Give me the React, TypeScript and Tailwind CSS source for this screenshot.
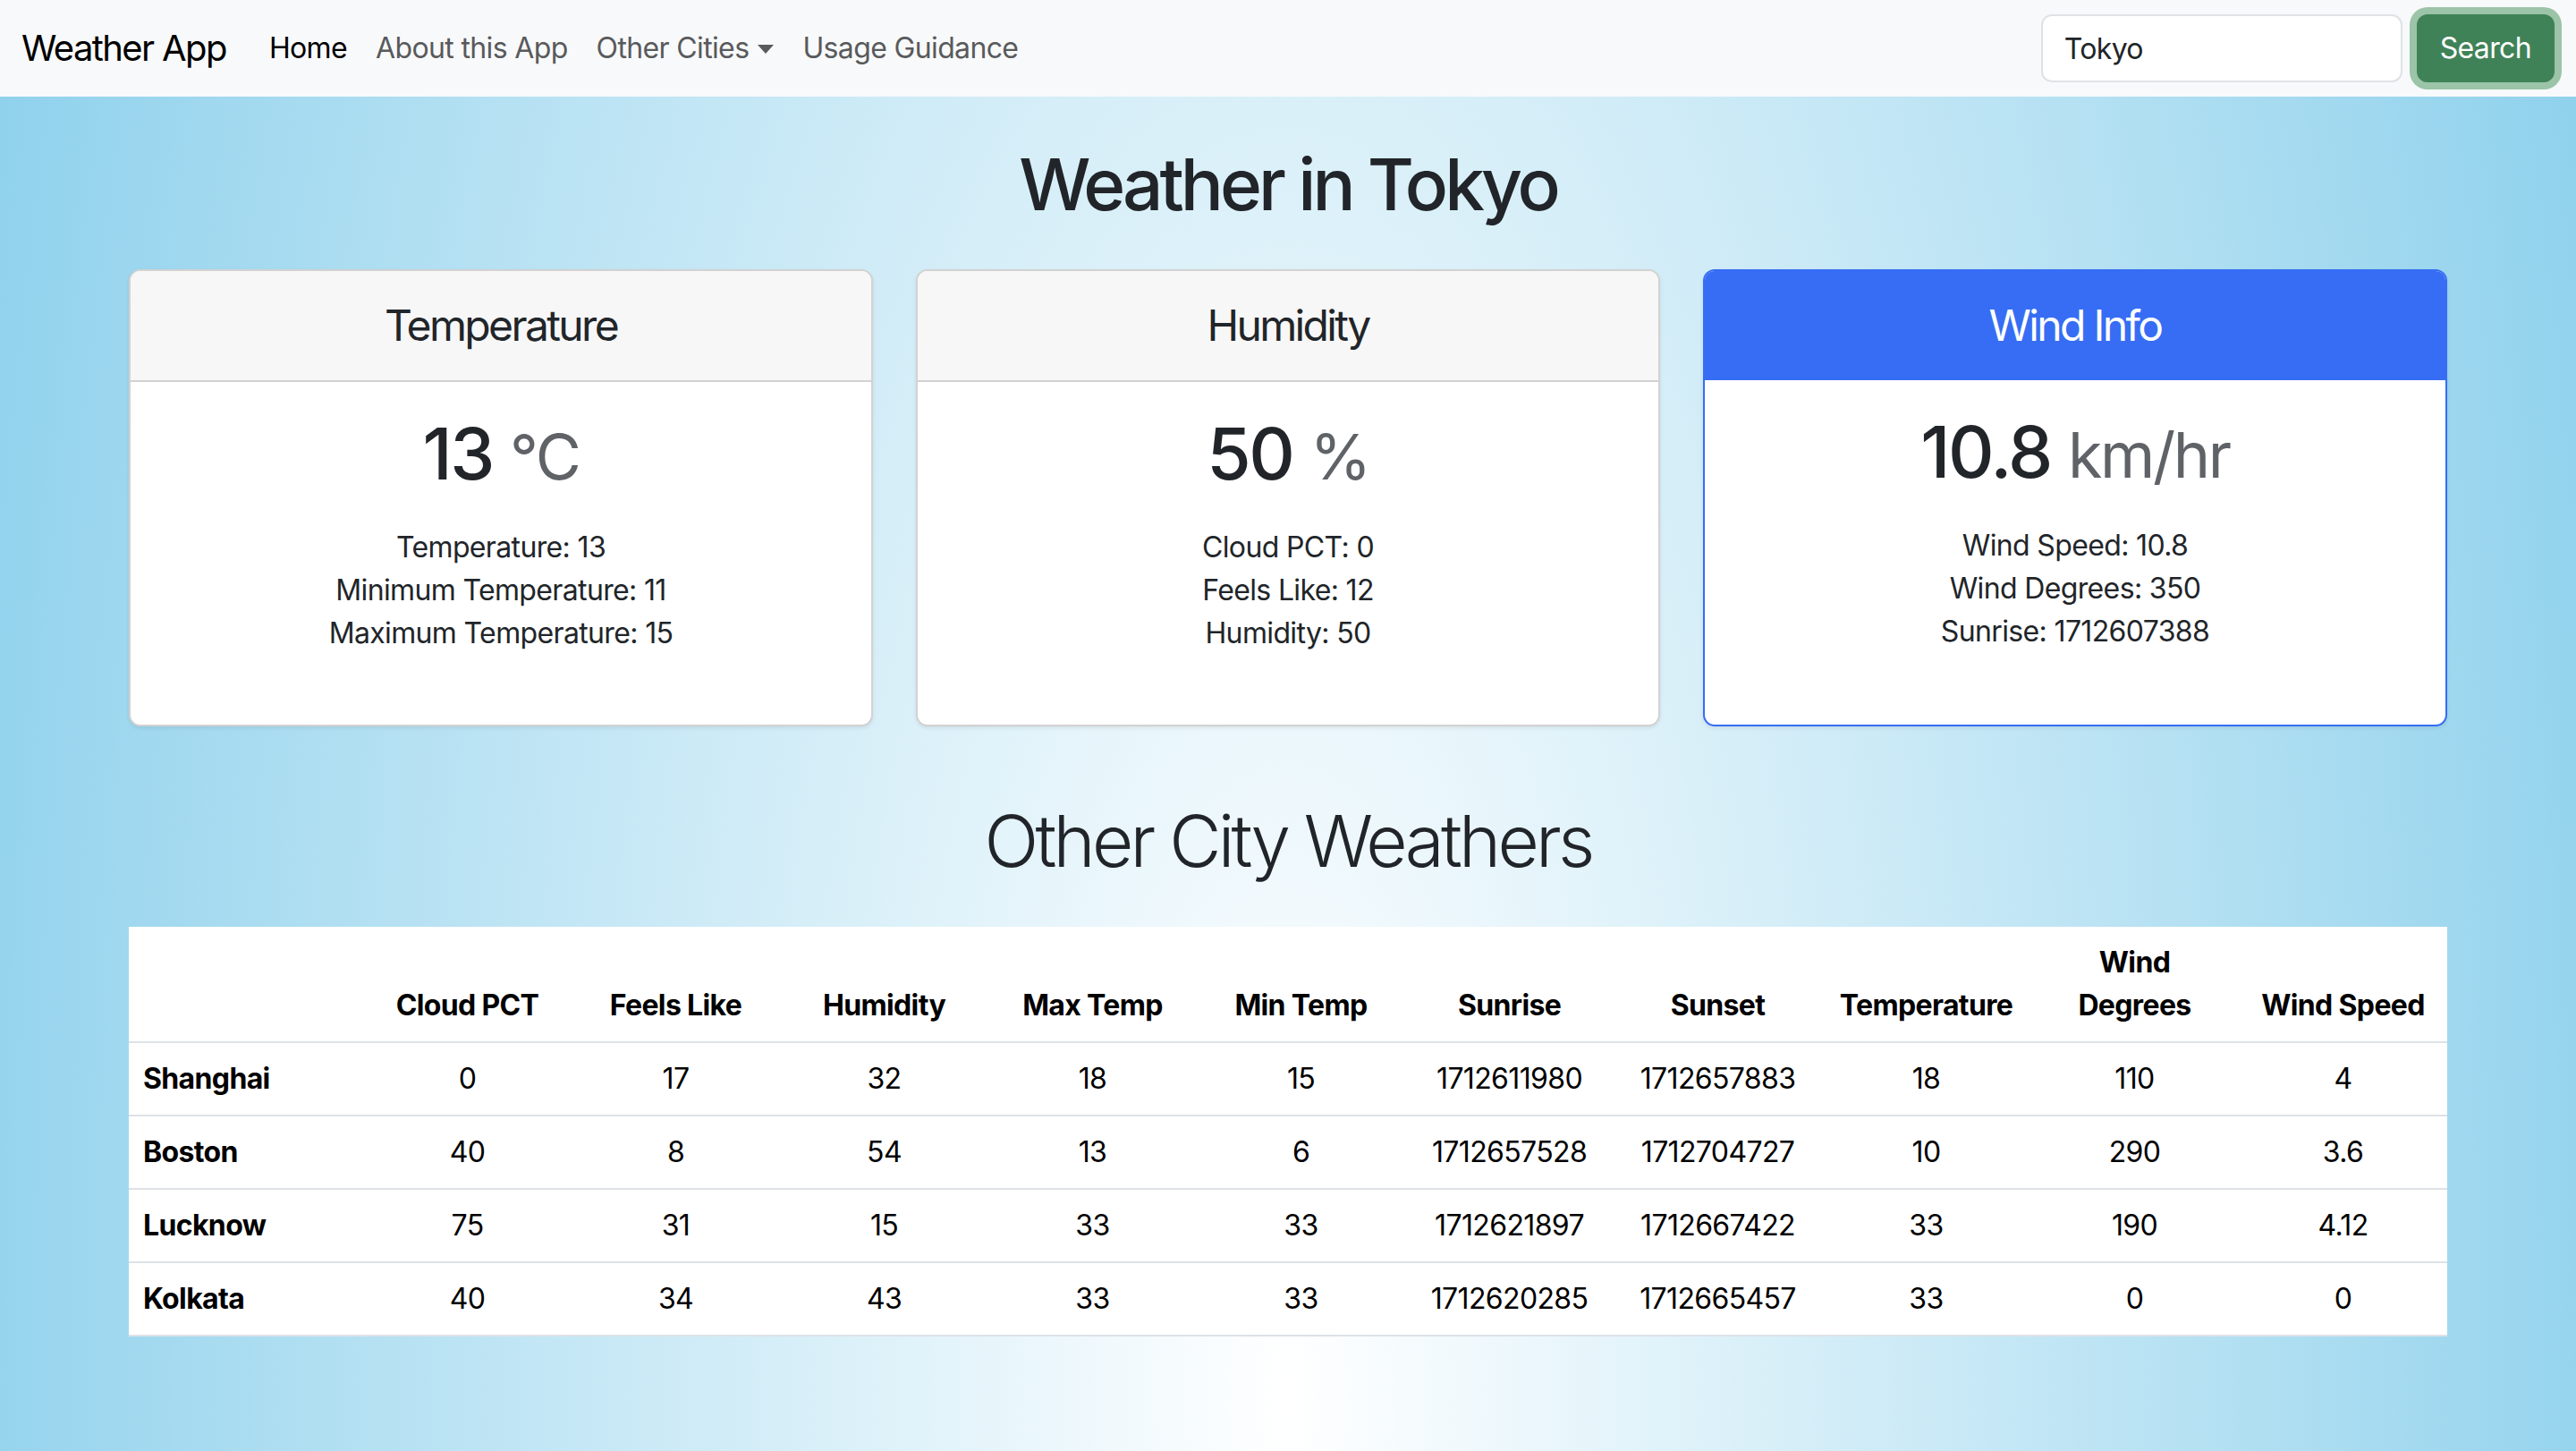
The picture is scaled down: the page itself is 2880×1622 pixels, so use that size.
import React from 'react'

type City = {
  name: string
  cloud: string
  feels: string
  humidity: string
  max: string
  min: string
  sunrise: string
  sunset: string
  temp: string
  windDeg: string
  windSpeed: string
}

const CITIES: City[] = [
  { name: 'Shanghai', cloud: '0', feels: '17', humidity: '32', max: '18', min: '15', sunrise: '1712611980', sunset: '1712657883', temp: '18', windDeg: '110', windSpeed: '4' },
  { name: 'Boston', cloud: '40', feels: '8', humidity: '54', max: '13', min: '6', sunrise: '1712657528', sunset: '1712704727', temp: '10', windDeg: '290', windSpeed: '3.6' },
  { name: 'Lucknow', cloud: '75', feels: '31', humidity: '15', max: '33', min: '33', sunrise: '1712621897', sunset: '1712667422', temp: '33', windDeg: '190', windSpeed: '4.12' },
  { name: 'Kolkata', cloud: '40', feels: '34', humidity: '43', max: '33', min: '33', sunrise: '1712620285', sunset: '1712665457', temp: '33', windDeg: '0', windSpeed: '0' }
]

const FONT = "font-['Inter','Liberation_Sans',sans-serif]"

const NavBar = () => (
  <nav className="flex items-center h-[108px] px-[24px] bg-[#f8f9fa]">
    <span className="mr-[32px] text-[40px] leading-[60px] text-black tracking-[-0.04em]">Weather App</span>
    <ul className="flex items-center text-[32px] leading-[48px] tracking-[-0.02em]">
      <li className="px-[16px] text-black">Home</li>
      <li className="px-[16px] text-[#595a5c]">About this App</li>
      <li className="flex items-center px-[16px] text-[#595a5c]">
        Other Cities
        <span className="ml-[10px] mt-[2px] border-t-[10px] border-t-[#595a5c] border-x-[9px] border-x-transparent" />
      </li>
      <li className="px-[16px] text-[#595a5c]">Usage Guidance</li>
    </ul>
    <div className="flex items-center ml-auto">
      <input
        readOnly
        value="Tokyo"
        className="w-[404px] h-[76px] mr-[16px] px-[24px] bg-white border-2 border-[#dee2e6] rounded-[12px] text-[32px] text-[#212529] outline-none tracking-[-0.02em]"
      />
      <button className="h-[76px] px-[24px] rounded-[12px] bg-[#408257] border-2 border-[#408257] text-white text-[32px] shadow-[0_0_0_8px_#9bc4a8] tracking-[-0.02em]">
        Search
      </button>
    </div>
  </nav>
)

const InfoCard = ({ title, value, unit, lines, primary }: { title: string; value: string; unit: string; lines: string[]; primary?: boolean }) => (
  <div className={`flex flex-col bg-white border-2 rounded-[13px] overflow-hidden shadow-[0_2px_4px_rgba(0,0,0,0.08)] ${primary ? 'border-[#366df4]' : 'border-[#d2d2d2]'}`}>
    <div className={`py-[32px] text-center text-[48px] leading-[58px] tracking-[-0.055em] ${primary ? 'bg-[#366df4] text-white' : 'bg-[#f7f7f7] text-[#212529] border-b-2 border-[#d2d2d2]'}`}>
      {title}
    </div>
    <div className="flex flex-col items-center pt-[32px] pb-[78px] text-[#212529]">
      <h2 className="mb-[29px] text-[80px] leading-[96px] font-medium tracking-[-0.03em]">
        {value} <span className="text-[70px] font-normal text-[#5f6266]">{unit}</span>
      </h2>
      {lines.map((l) => (
        <p key={l} className="text-[32px] leading-[48px] tracking-[-0.02em]">{l}</p>
      ))}
    </div>
  </div>
)

export default function App() {
  const headers = ['Cloud PCT', 'Feels Like', 'Humidity', 'Max Temp', 'Min Temp', 'Sunrise', 'Sunset', 'Temperature']
  return (
    <div
      className={`min-h-screen ${FONT} bg-[radial-gradient(ellipse_1650px_4600px_at_50%_1560px,#ffffff_0%,#87ceeb_100%)]`}
    >
      <NavBar />
      <main className="w-[2592px] mx-auto pt-[50px] pb-[120px]">
        <h1 className="mb-[47px] text-center text-[80px] leading-[96px] font-medium text-[#212529] tracking-[-0.05em]">Weather in Tokyo</h1>
        <div className="grid grid-cols-3 gap-[48px]">
          <InfoCard
            title="Temperature"
            value="13"
            unit="°C"
            lines={['Temperature: 13', 'Minimum Temperature: 11', 'Maximum Temperature: 15']}
          />
          <InfoCard
            title="Humidity"
            value="50"
            unit="%"
            lines={['Cloud PCT: 0', 'Feels Like: 12', 'Humidity: 50']}
          />
          <InfoCard
            primary
            title="Wind Info"
            value="10.8"
            unit="km/hr"
            lines={['Wind Speed: 10.8', 'Wind Degrees: 350', 'Sunrise: 1712607388']}
          />
        </div>

        <h2 className="mt-[80px] mb-[48px] text-center text-[80px] leading-[96px] font-light text-[#212529] tracking-[-0.047em]">Other City Weathers</h2>

        <table className="w-full table-fixed bg-white text-black text-[32px] leading-[48px] tracking-[-0.02em]">
          <colgroup>
            <col className="w-[262px]" />
            {Array.from({ length: 10 }).map((_, i) => (
              <col key={i} className="w-[233px]" />
            ))}
          </colgroup>
          <thead>
            <tr className="border-b-2 border-[#dee2e6]">
              <th className="px-[16px] py-[16px]" />
              {headers.map((h) => (
                <th key={h} className="px-[16px] py-[16px] align-bottom text-center font-bold whitespace-nowrap">{h}</th>
              ))}
              <th className="px-[16px] py-[16px] align-bottom text-center font-bold">
                Wind
                <br />
                Degrees
              </th>
              <th className="px-[16px] py-[16px] align-bottom text-center font-bold whitespace-nowrap">Wind Speed</th>
            </tr>
          </thead>
          <tbody>
            {CITIES.map((c) => (
              <tr key={c.name} className="border-b-2 border-[#dee2e6]">
                <th className="px-[16px] py-[16px] text-left font-bold">{c.name}</th>
                {[c.cloud, c.feels, c.humidity, c.max, c.min, c.sunrise, c.sunset, c.temp, c.windDeg, c.windSpeed].map((v, i) => (
                  <td key={i} className="px-[16px] py-[16px] text-center">{v}</td>
                ))}
              </tr>
            ))}
          </tbody>
        </table>
      </main>
    </div>
  )
}
